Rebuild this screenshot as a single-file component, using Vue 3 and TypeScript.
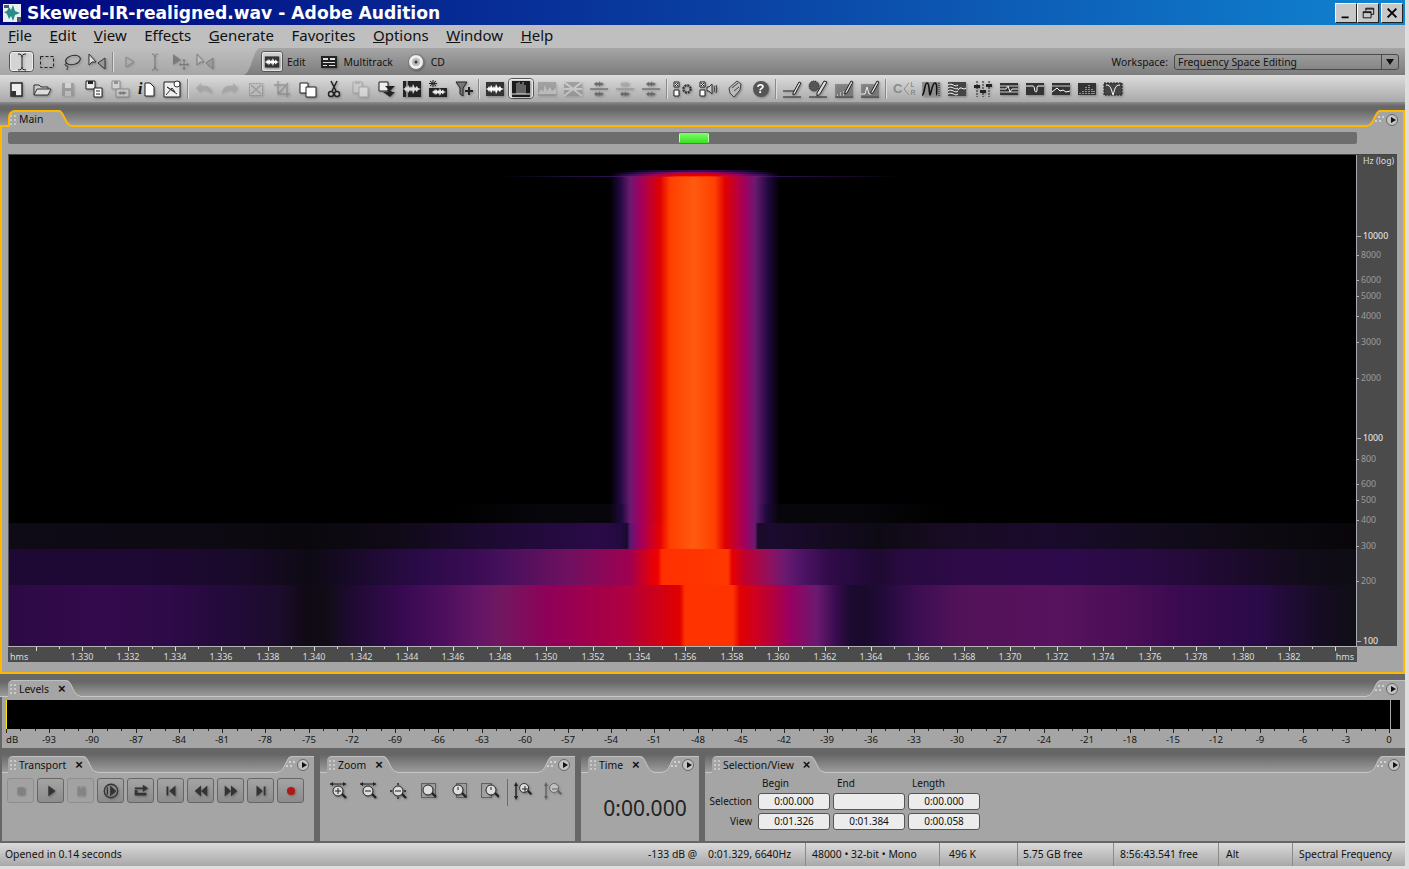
<template>
  <div class="app">
    <!-- shared icons -->
    <svg class="defs" aria-hidden="true">
      <defs>
        <linearGradient id="tbLeft" x1="0" y1="0" x2="0" y2="1">
          <stop offset="0" stop-color="#bebebe" />
          <stop offset="1" stop-color="#a6a6a6" />
        </linearGradient>
      </defs>
      <symbol id="tabCurve" viewBox="0 0 14 17">
        <path d="M0 0H1C6 0 7 16 14 16V17H0Z" fill="#a5a5a5" />
        <path d="M0 1H1C6 1 7 16 14 16" fill="none" stroke="currentColor" stroke-width="var(--sw, 1)" />
      </symbol>
      <symbol id="cornerCurve" viewBox="0 0 14 17">
        <path d="M14 0H13C8 0 7 16 0 16V17H14Z" fill="#a5a5a5" />
        <path d="M14 1H13C8 1 7 16 0 16" fill="none" stroke="currentColor" stroke-width="var(--sw, 1)" />
      </symbol>
      <symbol id="grip" viewBox="0 0 6 10">
        <path d="M0 0h2v2H0zM4 0h2v2H4zM0 4h2v2H0zM4 4h2v2H4zM0 8h2v2H0zM4 8h2v2H4z" fill="#c8c8c8" />
      </symbol>
      <symbol id="griph" viewBox="0 0 10 6">
        <path d="M3 0h2v2H3zM7 0h2v2H7zM0 4h2v2H0zM4 4h2v2H4z" fill="#d0d0d0" />
      </symbol>
      <symbol id="burst" viewBox="0 0 20 20">
        <path d="M1 10 3 9 4 7 5 9 6 6 8 9 9 7 10 9 11 5 13 9 15 7 16 9 19 10 16 11 15 13 13 11 11 15 10 11 9 13 8 11 6 14 5 11 4 13 3 11Z" />
      </symbol>

      <!-- edit tools -->
      <symbol id="ibeam" viewBox="0 0 20 20"><path d="M6 2C9 2 10 3 10 5V15C10 17 9 18 6 18M14 2C11 2 10 3 10 5M10 15C10 17 11 18 14 18" fill="none" stroke="#222" /></symbol>
      <symbol id="ibeam2" viewBox="0 0 20 20"><path d="M7 2C9 2 10 3 10 5V15C10 17 9 18 7 18M13 2C11 2 10 3 10 5M10 15C10 17 11 18 13 18" fill="none" stroke="#333" /></symbol>
      <symbol id="marquee" viewBox="0 0 20 20"><rect x="3.5" y="4.5" width="13" height="11" fill="none" stroke="#222" stroke-dasharray="3 2" /></symbol>
      <symbol id="lasso" viewBox="0 0 20 20"><ellipse cx="11" cy="8" rx="7.5" ry="4.5" transform="rotate(-14 11 8)" fill="none" stroke="#222" /><path d="M5 11c-3 1-2 3 0 3s0 2 0 4" fill="none" stroke="#222" /></symbol>
      <symbol id="scrub" viewBox="0 0 20 20"><path d="M2 2V13L5 10H9Z" fill="#ddd" stroke="#333" /><path d="M11 11 18 6V17Z" fill="#999" stroke="#333" /></symbol>
      <symbol id="scrub2" viewBox="0 0 20 20"><path d="M2 2V13L5 10H9Z" fill="#ccc" stroke="#444" /><path d="M11 11 18 6V17Z" fill="#888" stroke="#444" /></symbol>
      <symbol id="tsel" viewBox="0 0 20 20"><path d="M6 5V15L14 10Z" fill="#aaa" stroke="#555" /></symbol>
      <symbol id="hybrid" viewBox="0 0 20 20"><path d="M3 2V13L11 8Z" fill="#444" /><path d="M14 8V17M10 12.5H18" stroke="#444" /><path d="M14 7l-2 2h4zM14 18l-2-2h4zM9 12.5l2-2v4zM19 12.5l-2-2v4z" fill="#444" /></symbol>

      <!-- file and edit -->
      <symbol id="new" viewBox="0 0 20 20"><path d="M5 4H16V17H5Z" fill="#eee" stroke="#222" stroke-width="1.4" /><path d="M5 12H10V17H5Z" fill="#333" /></symbol>
      <symbol id="open" viewBox="0 0 20 20"><path d="M2 16V6H7L9 8H16V10" fill="#ccc" stroke="#333" /><path d="M2 16 5 10H19L16 16Z" fill="#ddd" stroke="#333" /></symbol>
      <symbol id="save" viewBox="0 0 20 20"><path d="M4 4H16V17H4Z" fill="#777" /><path d="M7 4H13V9H7Z" fill="#ddd" /><path d="M7 12H13V17H7Z" fill="#bbb" /></symbol>
      <symbol id="saveall" viewBox="0 0 20 20"><path d="M2 2H11V10H2Z" fill="#eee" stroke="#222" /><path d="M4 2H9V5H4Z" fill="#222" /><path d="M10 9H18V18H10Z" fill="#fff" stroke="#222" /><path d="M12 12h4M12 15h4" stroke="#222" /></symbol>
      <symbol id="batch" viewBox="0 0 20 20"><path d="M2 2H10V10H2Z" fill="#ddd" stroke="#555" /><path d="M4 2H8V5H4Z" fill="#555" /><path d="M6 10H19V18H6Z" fill="#ccc" stroke="#555" /><use href="#burst" x="6" y="9" width="13" height="10" fill="#333" /></symbol>
      <symbol id="infodoc" viewBox="0 0 20 20"><path d="M9 4H14L18 8V17H9Z" fill="#fff" stroke="#222" /></symbol>
      <symbol id="props" viewBox="0 0 20 20"><path d="M2 3H18V18H2Z" fill="#eee" stroke="#222" /><path d="M4 16 10 9 13 13 5 8 15 15" fill="none" stroke="#333" /><circle cx="15" cy="5" r="3" fill="#fff" stroke="#333" /></symbol>
      <symbol id="undo" viewBox="0 0 20 20"><path d="M2 9 7 4V7C13 6 18 8 18 15 16 12 12 11 7 11V14Z" fill="#8c8c8c" /></symbol>
      <symbol id="redo" viewBox="0 0 20 20"><path d="M18 9 13 4V7C7 6 2 8 2 15 4 12 8 11 13 11V14Z" fill="#8c8c8c" /></symbol>
      <symbol id="selx" viewBox="0 0 20 20"><rect x="3.5" y="4.5" width="13" height="12" fill="#bbb" stroke="#666" stroke-dasharray="2 1" /><path d="M5 6 15 15M15 6 5 15" stroke="#777" stroke-width="1.4" /></symbol>
      <symbol id="crop" viewBox="0 0 20 20"><path d="M6 2V15H18M2 6H15V18M16 4 6 15" fill="none" stroke="#666" stroke-width="1.4" /></symbol>
      <symbol id="copy" viewBox="0 0 20 20"><path d="M2 4H10V14H2Z" fill="#fff" stroke="#222" /><path d="M8 8H18V18H8Z" fill="#fff" stroke="#222" /></symbol>
      <symbol id="cut" viewBox="0 0 20 20"><path d="M7 2 12 12M13 2 8 12" stroke="#222" stroke-width="1.5" /><circle cx="7" cy="15" r="2.5" fill="#bbb" stroke="#222" stroke-width="1.4" /><circle cx="13" cy="15" r="2.5" fill="#bbb" stroke="#222" stroke-width="1.4" /></symbol>
      <symbol id="paste" viewBox="0 0 20 20"><path d="M3 3H12V14H3Z" fill="#ccc" stroke="#888" /><path d="M5 2H10V5H5Z" fill="#999" /><path d="M9 8H18V18H9Z" fill="#eee" stroke="#888" /></symbol>
      <symbol id="pastemix" viewBox="0 0 20 20"><path d="M3 3H12V12H3Z" fill="#eee" stroke="#222" /><path d="M9 7H19L14 12H16L14 15 11 11H13Z" fill="#222" /><path d="M7 13H19L14 18Z" fill="#222" /></symbol>
      <symbol id="wbar" viewBox="0 0 20 20"><path d="M1 2H19V18H1Z" fill="#222" /><path d="M5 2V18" stroke="#eee" /><use href="#burst" x="0" y="0" width="20" height="20" fill="#ddd" /></symbol>
      <symbol id="wstar" viewBox="0 0 20 20"><path d="M1 9H19V18H1Z" fill="#222" /><use href="#burst" x="2" y="5" width="18" height="16" fill="#eee" /><path d="M5 1V8M2 2 8 7M8 2 2 7M1 4.5H9" stroke="#222" /></symbol>
      <symbol id="filter" viewBox="0 0 20 20"><path d="M2 3H13L9 9V17L6 15V9Z" fill="#777" stroke="#222" /><path d="M15 8V16M11 12H19" stroke="#222" stroke-width="2" /></symbol>

      <!-- views -->
      <symbol id="vwave" viewBox="0 0 20 20"><path d="M1 3H19V17H1Z" fill="#333" /><use href="#burst" x="0" y="0" width="20" height="20" fill="#fff" /></symbol>
      <symbol id="vspec" viewBox="0 0 20 20"><path d="M1 2H19V18H1Z" fill="#1c1c1c" /><path d="M6 15V4M8 15V3M10 15V5M12 15V3M14 15V6" stroke="#ddd" opacity=".75" /><path d="M1 15H19" stroke="#eee" /></symbol>
      <symbol id="vbars" viewBox="0 0 20 20"><path d="M1 3H19V17H1Z" fill="#777" /><path d="M1 15 4 10 6 13 8 6 10 12 13 8 15 12 19 9V15Z" fill="#ccc" opacity=".8" /></symbol>
      <symbol id="vflag" viewBox="0 0 20 20"><path d="M1 3H19V17H1Z" fill="#777" /><path d="M1 3 19 17M19 3 1 17M1 10H19" stroke="#ccc" stroke-width="2" /></symbol>
      <symbol id="vtwo" viewBox="0 0 20 20"><path d="M1 10H19" stroke="#555" /><use href="#burst" x="1" y="-1" width="18" height="12" fill="#666" /><use href="#burst" x="1" y="9" width="18" height="12" fill="#666" /></symbol>
      <symbol id="vtwo2" viewBox="0 0 20 20"><path d="M1 10H19" stroke="#888" /><use href="#burst" x="1" y="-1" width="18" height="12" fill="#aaa" /><use href="#burst" x="1" y="9" width="18" height="12" fill="#666" /></symbol>

      <!-- effects, help -->
      <symbol id="fxgear" viewBox="0 0 20 20"><path d="M1 3H6V8H1Z" fill="#eee" stroke="#222" /><path d="M2 4 5 7M5 4 2 7" stroke="#222" /><path d="M1 11H6V17H1Z" fill="#fff" stroke="#222" /><circle cx="14" cy="10" r="3.6" fill="none" stroke="#333" stroke-width="2.4" stroke-dasharray="2 .8" /></symbol>
      <symbol id="fxspk" viewBox="0 0 20 20"><path d="M1 3H6V8H1Z" fill="#eee" stroke="#222" /><path d="M2 4 5 7M5 4 2 7" stroke="#222" /><path d="M1 11H6V17H1Z" fill="#fff" stroke="#222" /><path d="M8 8H10L13 5V15L10 12H8Z" fill="#ccc" stroke="#333" /><path d="M15 7C16 9 16 11 15 13M17 6C18 9 18 11 17 14" fill="none" stroke="#333" /></symbol>
      <symbol id="scroll" viewBox="0 0 20 20"><path d="M4 9 12 2 16 5 15 11 9 18 5 14Z" fill="#bbb" stroke="#444" /><path d="M7 9 13 4M9 12 14 8" stroke="#444" /></symbol>
      <symbol id="pen1" viewBox="0 0 20 20"><path d="M1 18H19" stroke="#222" /><path d="M1 12H12" stroke="#222" /><path d="M11 14 17 3 19 4 13 15 11 16Z" fill="#ddd" stroke="#222" /></symbol>
      <symbol id="pen2" viewBox="0 0 20 20"><path d="M1 18H19" stroke="#222" /><circle cx="6" cy="7" r="5" fill="#555" stroke="#222" stroke-dasharray="1 1" /><path d="M9 14 16 2 19 3 12 15 9 17Z" fill="#ddd" stroke="#222" /></symbol>
      <symbol id="pen3" viewBox="0 0 20 20"><path d="M1 18H19" stroke="#222" /><path d="M1 5H19V18H1Z" fill="#666" opacity=".6" /><path d="M3 16h1M6 14h1M6 16h1M9 13h1M9 16h1" stroke="#eee" /><path d="M11 13 17 2 19 3 13 14 11 15Z" fill="#ddd" stroke="#222" /></symbol>
      <symbol id="pen4" viewBox="0 0 20 20"><path d="M1 18H19" stroke="#222" /><path d="M1 5H19V18H1Z" fill="#666" opacity=".6" /><path d="M1 15H5L7 8 9 15H12" fill="none" stroke="#eee" /><path d="M11 13 17 2 19 3 13 14 11 15Z" fill="#ddd" stroke="#222" /></symbol>
      <symbol id="wedge" viewBox="0 0 6 14"><path d="M6 1 1 7 6 13" fill="none" stroke="#8a8a8a" /></symbol>
      <symbol id="eqpk" viewBox="0 0 20 20"><path d="M1 3H19V17H1Z" fill="#8e8e8e" /><path d="M1 16C4 16 3 4 6 4S8 16 9 16 11 4 14 4 15 16 16 16" fill="none" stroke="#111" stroke-width="1.6" /><path d="M18 4V17" stroke="#222" stroke-dasharray="1 1" /></symbol>
      <symbol id="eqwave" viewBox="0 0 20 20"><path d="M1 3H19V17H1Z" fill="#444" /><path d="M1 6C5 3 8 9 11 6M1 9C5 6 8 12 11 9M1 12C5 9 8 15 11 12M1 15C5 12 8 18 11 15M11 11C14 6 16 12 19 9" fill="none" stroke="#fff" /></symbol>
      <symbol id="faders" viewBox="0 0 20 20"><path d="M4 2V18M10 2V18M16 2V18" stroke="#222" stroke-dasharray="2 1" /><path d="M1 6H7V9H1ZM7 11H13V14H7ZM13 5H19V8H13Z" fill="#222" /></symbol>
      <symbol id="bx1" viewBox="0 0 20 20"><path d="M1 4H19V16H1Z" fill="#333" /><path d="M1 7H19M1 13H19" stroke="#ccc" /><path d="M1 10H7L9 7 11 13 13 10H19" fill="none" stroke="#eee" /></symbol>
      <symbol id="bx2" viewBox="0 0 20 20"><path d="M1 4H19V16H1Z" fill="#333" /><path d="M1 7H8C10 7 9 13 11 13S11 7 13 7H19" fill="none" stroke="#fff" /></symbol>
      <symbol id="bx3" viewBox="0 0 20 20"><path d="M1 4H19V16H1Z" fill="#333" /><path d="M1 7H19" stroke="#ccc" /><path d="M1 13 6 9 9 12 12 11 15 13 19 12" fill="none" stroke="#fff" /></symbol>
      <symbol id="bx4" viewBox="0 0 20 20"><path d="M1 4H19V16H1Z" fill="#333" /><path d="M3 15v-2M6 15v-4M9 15v-7M12 15v-9M15 15v-5M17 15v-3" stroke="#eee" stroke-dasharray="1 1" /></symbol>
      <symbol id="bx5" viewBox="0 0 20 20"><path d="M1 4H19V16H1Z" fill="#444" stroke="#222" stroke-dasharray="2 1" /><path d="M3 6C8 6 8 10 10 16 12 10 12 6 17 6" fill="none" stroke="#fff" /></symbol>

      <!-- transport -->
      <symbol id="tstop" viewBox="0 0 20 20"><path d="M6 6H14V14H6Z" fill="#808080" /></symbol>
      <symbol id="tplay" viewBox="0 0 20 20"><path d="M7 4V16L15 10Z" fill="#333" /></symbol>
      <symbol id="tpause" viewBox="0 0 20 20"><path d="M6 5H9V15H6ZM11 5H14V15H11Z" fill="#848484" /></symbol>
      <symbol id="tview" viewBox="0 0 20 20"><circle cx="10" cy="10" r="7.5" fill="none" stroke="#333" stroke-width="1.4" /><path d="M9 4V16L16 10Z" fill="#333" /><path d="M6 6V14" stroke="#333" stroke-width="1.4" /></symbol>
      <symbol id="tloop" viewBox="0 0 20 20"><path d="M3 9V15H16V12H6V9Z" fill="#333" /><path d="M3 6H12V3L18 7 12 11V8H3Z" fill="#333" /></symbol>
      <symbol id="tstart" viewBox="0 0 20 20"><path d="M5 5H7V15H5ZM15 4V16L8 10Z" fill="#333" /></symbol>
      <symbol id="trew" viewBox="0 0 20 20"><path d="M10 4V16L3 10ZM17 4V16L10 10Z" fill="#333" /></symbol>
      <symbol id="tff" viewBox="0 0 20 20"><path d="M3 4V16L10 10ZM10 4V16L17 10Z" fill="#333" /></symbol>
      <symbol id="tend" viewBox="0 0 20 20"><path d="M5 4V16L12 10ZM13 5H15V15H13Z" fill="#333" /></symbol>
      <symbol id="trec" viewBox="0 0 20 20"><circle cx="10" cy="10" r="4.5" fill="#b01818" /></symbol>

      <!-- zoom -->
      <symbol id="lens" viewBox="0 0 20 20"><path d="M12 12 17 17" stroke="#222" stroke-width="2.4" /><circle cx="9" cy="10" r="5" fill="#ddd" stroke="#222" /></symbol>
      <symbol id="zinx" viewBox="0 0 20 20"><path d="M1 3H17" stroke="#222" /><path d="M1 3 4 1V5ZM17 3 14 1V5Z" fill="#222" /><use href="#lens" width="20" height="20" /><path d="M6 10H12M9 7V13" stroke="#222" /></symbol>
      <symbol id="zoutx" viewBox="0 0 20 20"><path d="M1 3H17" stroke="#222" /><path d="M1 3 4 1V5ZM17 3 14 1V5Z" fill="#222" /><use href="#lens" width="20" height="20" /><path d="M6 10H12" stroke="#222" /></symbol>
      <symbol id="zfull" viewBox="0 0 20 20"><path d="M9 2V4M9 16V18M1 10H3M15 10H17" stroke="#222" stroke-width="1.4" /><use href="#lens" width="20" height="20" /><path d="M6 10H12" stroke="#222" /></symbol>
      <symbol id="zsel" viewBox="0 0 20 20"><rect x="2.5" y="2.5" width="14" height="14" fill="none" stroke="#222" stroke-dasharray="1 1" /><use href="#lens" y="-1" width="20" height="20" /></symbol>
      <symbol id="zl" viewBox="0 0 20 20"><rect x="7.5" y="2.5" width="10" height="14" fill="none" stroke="#222" stroke-dasharray="1 1" /><use href="#lens" y="-1" width="20" height="20" /><path d="M9 6V9" stroke="#222" /></symbol>
      <symbol id="zr" viewBox="0 0 20 20"><rect x="2.5" y="2.5" width="10" height="14" fill="none" stroke="#222" stroke-dasharray="1 1" /><use href="#lens" x="3" y="-1" width="20" height="20" /><path d="M12 6V9" stroke="#222" /></symbol>
      <symbol id="zinv" viewBox="0 0 20 20"><path d="M3 3V17" stroke="#222" stroke-width="1.4" /><path d="M3 1 1 5H5ZM3 19 1 15H5Z" fill="#222" /><use href="#lens" x="3" y="-2" width="18" height="18" /><path d="M9 8H15M12 5V11" stroke="#222" /></symbol>
      <symbol id="zoutv" viewBox="0 0 20 20"><path d="M3 3V17" stroke="#222" stroke-width="1.4" /><path d="M3 1 1 5H5ZM3 19 1 15H5Z" fill="#222" /><use href="#lens" x="3" y="-2" width="18" height="18" /><path d="M9 8H15" stroke="#222" /></symbol>
    </svg>

    <div class="window">
      <header class="title-bar">
        <svg class="app-icon" viewBox="0 0 18 18">
          <rect width="18" height="18" fill="#e8f0f0" />
          <path d="M1 8 4 7 6 3 8 6 10 1 12 7 17 9 12 11 10 17 8 12 6 15 4 10Z" fill="#2b8a8a" />
          <path d="M1 1H6V4H1ZM14 13H18V18H14Z" fill="#556" />
        </svg>
        <span class="title-text">Skewed-IR-realigned.wav - Adobe Audition</span>
        <div class="win-btns">
          <button class="win-btn">
            <svg viewBox="0 0 16 16"><path d="M3 12H11V14H3Z" fill="#000" /></svg>
          </button>
          <button class="win-btn">
            <svg viewBox="0 0 16 16"><path d="M5.5 2.5H14.5V9.5H11.5M5.5 2.5V5.5M5.5 3.5H14.5" fill="none" stroke="#000" /><path d="M2.5 6.5H11.5V13.5H2.5ZM2.5 7.5H11.5" fill="none" stroke="#000" /></svg>
          </button>
          <button class="win-btn close">
            <svg viewBox="0 0 16 16"><path d="M3 3 13 13M13 3 3 13" stroke="#000" stroke-width="2.2" /></svg>
          </button>
        </div>
      </header>

      <nav class="menu-bar">
        <span><u>F</u>ile</span>
        <span><u>E</u>dit</span>
        <span><u>V</u>iew</span>
        <span>Effe<u>c</u>ts</span>
        <span><u>G</u>enerate</span>
        <span>Favo<u>r</u>ites</span>
        <span><u>O</u>ptions</span>
        <span><u>W</u>indow</span>
        <span><u>H</u>elp</span>
      </nav>

      <div class="toolbar-one">
        <div class="tools-left">
          <template v-for="(t, i) in editTools" :key="i">
            <span v-if="t === '|'" class="sep sep-tool"></span>
            <span v-else class="tool" :class="{ selected: t === 'ibeam', off: offTools.includes(t) }">
              <svg class="ico"><use :href="'#' + t" /></svg>
            </span>
          </template>
        </div>
        <svg class="left-curve" viewBox="0 0 24 27" preserveAspectRatio="none">
          <path d="M0 0H24C14 4 12 27 0 27Z" fill="url(#tbLeft)" />
        </svg>
        <div class="modes">
          <span class="mode">
            <span class="mode-btn"><svg class="ico ico-sm"><use href="#vwave" /></svg></span>
            Edit
          </span>
          <span class="mode mode-next">
            <svg class="ico ico-sm" viewBox="0 0 16 12">
              <path d="M0 0H16V12H0Z" fill="#222" />
              <path d="M2 2H7V4H2ZM9 2H14V4H9ZM2 6H14V7H2ZM2 9H6V10H2ZM8 9H14V10H8Z" fill="#ddd" />
            </svg>
            Multitrack
          </span>
          <span class="mode mode-next">
            <svg class="ico ico-sm" viewBox="0 0 16 16">
              <circle cx="8" cy="8" r="7.5" fill="#eee" stroke="#777" />
              <circle cx="8" cy="8" r="4" fill="#bbb" />
              <circle cx="8" cy="8" r="1.5" fill="#333" />
            </svg>
            CD
          </span>
        </div>
        <div class="workspace">
          <span>Workspace:</span>
          <div class="combo">
            <span class="combo-text">Frequency Space Editing</span>
            <span class="combo-arrow"><i></i></span>
          </div>
        </div>
      </div>

      <div class="toolbar-two">
        <template v-for="(t, i) in mainTools" :key="i">
          <span v-if="t === '|'" class="sep"></span>
          <span v-else class="tool" :class="{ selected: t === 'vspec', off: offTools.includes(t) }">
            <span v-if="t === 'help'" class="help-ico">?</span>
            <template v-else-if="t === 'info'">
              <span class="info-i">i</span>
              <svg class="ico info-doc"><use href="#infodoc" /></svg>
            </template>
            <template v-else-if="t === 'clr'">
              <span class="clr-c">C</span>
              <svg class="clr-wedge"><use href="#wedge" /></svg>
              <span class="clr-lr"><span>L</span><span>R</span></span>
            </template>
            <svg v-else class="ico"><use :href="'#' + t" /></svg>
          </span>
        </template>
      </div>

      <!-- main editor panel -->
      <section class="main-panel">
        <div class="strip strip-main">
          <div class="tab tab-main">
            <svg class="grip"><use href="#grip" /></svg>
            <span>Main</span>
          </div>
          <svg class="curve curve-main"><use href="#tabCurve" /></svg>
          <div class="grow"></div>
          <svg class="curve curve-main"><use href="#cornerCurve" /></svg>
          <div class="corner corner-main">
            <svg class="grip-h"><use href="#griph" /></svg>
            <span class="menu-dot"><i></i></span>
          </div>
        </div>
        <div class="main-body">
          <div class="overview">
            <div class="thumb"></div>
          </div>
          <div class="viewer">
            <div class="spectrum">
              <div class="band band-top"></div>
              <div class="band band-arc1"></div>
              <div class="band band-arc2"></div>
              <div class="band band-arc3"></div>
              <div class="band band-line"></div>
              <div class="band band-col"></div>
              <div class="band band-faint"></div>
              <div class="band band-a"></div>
              <div class="band band-b"></div>
              <div class="band band-c"></div>
            </div>
            <div class="hz-ruler">
              <span class="hz-title">Hz (log)</span>
              <div
                v-for="m in hzMarks"
                :key="m.label"
                class="hz-mark"
                :class="{ major: m.major }"
                :style="{ top: m.y - 155 + 'px' }"
              >
                <i></i><span>{{ m.label }}</span>
              </div>
            </div>
            <div class="time-ruler">
              <i
                v-for="t in timeTicks"
                :key="t.x"
                class="tick"
                :class="{ big: t.major }"
                :style="{ left: t.x - 8 + 'px' }"
              ></i>
              <span class="hms">hms</span>
              <span
                v-for="t in timeLabels"
                :key="t.label"
                class="time-label"
                :style="{ left: t.x - 8 + 'px' }"
              >{{ t.label }}</span>
              <span class="hms hms-end">hms</span>
            </div>
          </div>
        </div>
      </section>

      <!-- levels -->
      <section class="levels">
        <div class="strip strip-levels">
          <div class="tab">
            <svg class="grip"><use href="#grip" /></svg>
            <span>Levels</span>
            <b class="close-x">×</b>
          </div>
          <svg class="curve"><use href="#tabCurve" /></svg>
          <div class="grow"></div>
          <svg class="curve"><use href="#cornerCurve" /></svg>
          <div class="corner corner-main corner-levels">
            <svg class="grip-h"><use href="#griph" /></svg>
            <span class="menu-dot"><i></i></span>
          </div>
        </div>
        <div class="levels-body">
          <div class="meter">
            <i class="meter-peak"></i>
            <i class="meter-end"></i>
          </div>
          <div class="db-scale">
            <i
              v-for="t in dbTicks"
              :key="t.x"
              class="db-tick"
              :class="{ big: t.major }"
              :style="{ left: t.x + 'px' }"
            ></i>
            <span
              v-for="d in dbLabels"
              :key="d.label"
              class="db-label"
              :style="{ left: d.x + 'px' }"
            >{{ d.label }}</span>
          </div>
        </div>
      </section>

      <!-- bottom docked panels -->
      <div class="dock-row">
        <section class="dock dock-transport">
          <div class="strip">
            <div class="tab">
              <svg class="grip"><use href="#grip" /></svg>
              <span>Transport</span>
              <b class="close-x">×</b>
            </div>
            <svg class="curve"><use href="#tabCurve" /></svg>
            <div class="grow"></div>
            <svg class="curve"><use href="#cornerCurve" /></svg>
            <div class="corner">
              <svg class="grip-h"><use href="#griph" /></svg>
              <span class="menu-dot"><i></i></span>
            </div>
          </div>
          <div class="dock-body transport-body">
            <button
              v-for="b in transportBtns"
              :key="b"
              class="t-btn"
              :class="{ 't-off': b === 'tstop' || b === 'tpause' }"
            >
              <svg class="ico"><use :href="'#' + b" /></svg>
            </button>
          </div>
        </section>

        <section class="dock dock-zoom">
          <div class="strip">
            <div class="tab">
              <svg class="grip"><use href="#grip" /></svg>
              <span>Zoom</span>
              <b class="close-x">×</b>
            </div>
            <svg class="curve"><use href="#tabCurve" /></svg>
            <div class="grow"></div>
            <svg class="curve"><use href="#cornerCurve" /></svg>
            <div class="corner">
              <svg class="grip-h"><use href="#griph" /></svg>
              <span class="menu-dot"><i></i></span>
            </div>
          </div>
          <div class="dock-body zoom-body">
            <template v-for="(z, i) in zoomBtns" :key="i">
              <span v-if="z === '|'" class="zoom-sep"></span>
              <span v-else class="z-btn" :class="{ off: z === 'zoutv' }">
                <svg class="ico"><use :href="'#' + z" /></svg>
              </span>
            </template>
          </div>
        </section>

        <section class="dock dock-time">
          <div class="strip">
            <div class="tab">
              <svg class="grip"><use href="#grip" /></svg>
              <span>Time</span>
              <b class="close-x">×</b>
            </div>
            <svg class="curve"><use href="#tabCurve" /></svg>
            <div class="grow"></div>
            <svg class="curve"><use href="#cornerCurve" /></svg>
            <div class="corner">
              <svg class="grip-h"><use href="#griph" /></svg>
              <span class="menu-dot"><i></i></span>
            </div>
          </div>
          <div class="dock-body time-body">0:00.000</div>
        </section>

        <section class="dock dock-sel">
          <div class="strip">
            <div class="tab">
              <svg class="grip"><use href="#grip" /></svg>
              <span>Selection/View</span>
              <b class="close-x">×</b>
            </div>
            <svg class="curve"><use href="#tabCurve" /></svg>
            <div class="grow"></div>
            <svg class="curve"><use href="#cornerCurve" /></svg>
            <div class="corner">
              <svg class="grip-h"><use href="#griph" /></svg>
              <span class="menu-dot"><i></i></span>
            </div>
          </div>
          <div class="dock-body sel-body">
            <div class="sel-grid">
              <span></span>
              <span class="sel-head">Begin</span>
              <span class="sel-head">End</span>
              <span class="sel-head">Length</span>
              <span class="sel-label">Selection</span>
              <span class="sel-field">0:00.000</span>
              <span class="sel-field"></span>
              <span class="sel-field">0:00.000</span>
              <span class="sel-label">View</span>
              <span class="sel-field">0:01.326</span>
              <span class="sel-field">0:01.384</span>
              <span class="sel-field">0:00.058</span>
            </div>
          </div>
        </section>
      </div>

      <footer class="status-bar">
        <span class="cell c1">Opened in 0.14 seconds</span>
        <span class="cell c2">-133 dB @</span>
        <span class="cell c3">0:01.329, 6640Hz</span>
        <span class="cell c4">48000 • 32-bit • Mono</span>
        <span class="cell c5">496 K</span>
        <span class="cell c6">5.75 GB free</span>
        <span class="cell c7">8:56:43.541 free</span>
        <span class="cell c8">Alt</span>
        <span class="cell c9">Spectral Frequency</span>
      </footer>
    </div>
  </div>
</template>

<script setup lang="ts">
const editTools = ['ibeam', 'marquee', 'lasso', 'scrub', '|', 'tsel', 'ibeam2', 'hybrid', 'scrub2']

const mainTools = [
  'new', 'open', 'save', 'saveall', 'batch', 'info', 'props', '|',
  'undo', 'redo', 'selx', 'crop', 'copy', 'cut', 'paste', 'pastemix', 'wbar', 'wstar', 'filter', '|',
  'vwave', 'vspec', 'vbars', 'vflag', 'vtwo', 'vtwo2', 'vtwo', '|',
  'fxgear', 'fxspk', 'scroll', 'help', '|',
  'pen1', 'pen2', 'pen3', 'pen4', '|',
  'clr', 'eqpk', 'eqwave', 'faders', 'bx1', 'bx2', 'bx3', 'bx4', 'bx5',
]

const offTools = ['tsel', 'ibeam2', 'hybrid', 'scrub2', 'save', 'batch', 'undo', 'redo', 'selx', 'crop', 'paste', 'vbars', 'vflag']

const transportBtns = ['tstop', 'tplay', 'tpause', 'tview', 'tloop', 'tstart', 'trew', 'tff', 'tend', 'trec']
const zoomBtns = ['zinx', 'zoutx', 'zfull', 'zsel', 'zl', 'zr', '|', 'zinv', 'zoutv']

const hzMarks = [
  { label: '10000', y: 236, major: true },
  { label: '8000', y: 255 },
  { label: '6000', y: 280 },
  { label: '5000', y: 296 },
  { label: '4000', y: 316 },
  { label: '3000', y: 342 },
  { label: '2000', y: 378 },
  { label: '1000', y: 438, major: true },
  { label: '800', y: 459 },
  { label: '600', y: 484 },
  { label: '500', y: 500 },
  { label: '400', y: 520 },
  { label: '300', y: 546 },
  { label: '200', y: 581 },
  { label: '100', y: 641, major: true },
]

// one label every 46.42px, starting at 1.330
const timeLabels = Array.from({ length: 27 }, (_, i) => ({
  label: (1.33 + i * 0.002).toFixed(3),
  x: Math.round(82 + i * 46.42),
}))

const timeTicks = Array.from({ length: 59 }, (_, i) => ({
  x: Math.round(35.6 + i * 23.21),
  major: i % 2 === 0,
}))

const dbTicks = Array.from({ length: 97 }, (_, i) => ({
  x: Math.round(4 + i * 14.41),
  major: i % 3 === 0,
}))

const dbLabels = Array.from({ length: 33 }, (_, i) => ({
  label: i === 0 ? 'dB' : String(-96 + i * 3),
  x: Math.round(4 + i * 43.23),
}))
</script>

<style>
html, body { margin: 0; background: #e2e2e2; }
</style>

<style scoped>
.app {
  width: 1409px;
  height: 869px;
  overflow: hidden;
  background: #dedede;
  font: 10.4px "Noto Sans", "Liberation Sans", sans-serif;
  color: #111;
  display: flex;
  flex-direction: column;
}
.defs { width: 0; height: 0; display: block; }
.window { width: 1405px; height: 866px; background: #666; display: flex; flex-direction: column; }

/* title */
.title-bar {
  height: 25px;
  flex: none;
  display: flex;
  align-items: center;
  background: linear-gradient(90deg, #00067e 0%, #0a3ea0 50%, #1084d0 100%);
  color: #fff;
  padding-left: 3px;
}
.app-icon { width: 18px; height: 18px; }
.title-text { margin: 1px 0 0 6px; font: bold 17.15px "DejaVu Sans", sans-serif; white-space: nowrap; }
.win-btns { margin-left: auto; display: flex; margin-right: 2px; }
.win-btn {
  width: 22px;
  height: 20px;
  padding: 2px 3px;
  background: #c8c8c8;
  border: 1px solid;
  border-color: #fff #222 #222 #fff;
  display: flex;
  align-items: center;
  justify-content: center;
}
.win-btn svg { width: 16px; height: 16px; display: block; }
.win-btn.close { margin-left: 2px; }

/* menu */
.menu-bar {
  height: 23px;
  flex: none;
  background: #bfbfbf;
  display: flex;
  align-items: center;
  gap: 17.5px;
  padding-left: 8px;
  font-size: 15px;
}
.menu-bar span { line-height: 22px; margin-top: -3px; }

/* toolbars */
.toolbar-one {
  height: 27px;
  flex: none;
  display: flex;
  align-items: center;
  background: linear-gradient(#a6a6a6, #7c7c7c);
}
.tools-left {
  width: 243px;
  height: 27px;
  padding-left: 9px;
  box-sizing: border-box;
  display: flex;
  align-items: center;
  background: linear-gradient(#bebebe, #a6a6a6);
}
.left-curve { width: 16px; height: 27px; flex: none; }
.tool {
  width: 26px;
  height: 21px;
  flex: none;
  box-sizing: border-box;
  display: flex;
  align-items: center;
  justify-content: center;
}
.tool.selected {
  border: 1px solid #555;
  border-radius: 4px;
  outline: 1px solid #eee;
  outline-offset: -2px;
  background: #d4d4d4;
}
.tools-left .tool { width: 25px; }
.off { opacity: 0.5; }
.ico {
  width: 20px;
  height: 20px;
  display: block;
  flex: none;
  filter: drop-shadow(1px 1px 1px rgba(0, 0, 0, 0.3));
}
.ico-sm { width: 16px; height: 16px; }
.sep {
  width: 1px;
  height: 20px;
  margin: 0 1.75px;
  background: #8a8a8a;
  border-right: 1px solid #ddd;
  flex: none;
}
.sep-tool { margin: 0 3px; }
.modes { display: flex; align-items: center; padding-left: 2px; }
.mode { display: flex; align-items: center; gap: 7px; }
.mode-btn {
  width: 22px;
  height: 21px;
  margin-right: -3px;
  box-sizing: border-box;
  border: 1px solid #555;
  border-radius: 3px;
  outline: 1px solid #e6e6e6;
  outline-offset: -2px;
  background: #cfcfcf;
  display: flex;
  align-items: center;
  justify-content: center;
}
.mode-next { margin-left: 15px; }
.workspace { margin-left: auto; display: flex; align-items: center; gap: 6px; padding-right: 6px; }
.combo {
  width: 225px;
  height: 16px;
  box-sizing: border-box;
  border: 1px solid #4a4a4a;
  border-radius: 3px;
  display: flex;
  align-items: center;
}
.combo-text { flex: 1; padding-left: 3px; line-height: 14px; }
.combo-arrow {
  width: 16px;
  height: 14px;
  border-left: 1px solid #4a4a4a;
  display: flex;
  align-items: center;
  justify-content: center;
}
.combo-arrow i {
  border-left: 4px solid transparent;
  border-right: 4px solid transparent;
  border-top: 6px solid #111;
}
.toolbar-two {
  height: 27px;
  flex: none;
  padding-left: 3px;
  display: flex;
  align-items: center;
  background: linear-gradient(#dcdcdc, #a9a9a9);
}
.toolbar-two .sep:nth-last-child(10) { margin-right: 5.5px; }
.help-ico {
  width: 16px;
  height: 16px;
  border-radius: 50%;
  background: #555;
  color: #fff;
  font: bold 13px/16px "Liberation Sans", sans-serif;
  text-align: center;
  filter: drop-shadow(1px 1px 1px rgba(0, 0, 0, 0.3));
}
.info-i { font: italic bold 16px/20px "Liberation Serif", serif; color: #111; width: 6px; margin-left: 2px; }
.info-doc { margin-left: -8px; }
.clr-c { font: bold 13px/20px "Liberation Sans", sans-serif; color: #8a8a8a; margin-left: -2px; }
.clr-wedge { width: 6px; height: 14px; flex: none; margin: 0 1px; }
.clr-lr { display: flex; flex-direction: column; font: 7px/8px "Liberation Sans", sans-serif; color: #777; }

/* tab strips */
.strip {
  height: 18px;
  flex: none;
  display: flex;
  align-items: flex-end;
  padding-left: 6px;
  box-sizing: border-box;
  color: #c6c6c6;
  background: linear-gradient(#686868, #9c9c9c);
  border-bottom: 1px solid #c6c6c6;
}
.grow { flex: 1; }
.tab {
  height: 17px;
  margin-bottom: -1px;
  padding: 0 0 0 2px;
  display: flex;
  align-items: center;
  background: #a5a5a5;
  border-top-left-radius: 5px;
  border-top: 1px solid #c0c0c0;
  box-sizing: border-box;
  white-space: nowrap;
  color: #111;
}
.tab span { margin-top: 0; }
.tab-main span { margin-top: -2px; }
.grip { width: 6px; height: 10px; margin-right: 3px; flex: none; }
.grip-h { width: 10px; height: 6px; margin: -2px 1px 0 -6px; flex: none; }
.close-x { margin-left: 9px; font: bold 13px "Liberation Sans", sans-serif; line-height: 10px; }
.curve { width: 14px; height: 17px; margin-bottom: -1px; flex: none; display: block; }
.corner {
  width: 22px;
  height: 17px;
  margin-bottom: -1px;
  background: #a5a5a5;
  display: flex;
  align-items: center;
  border-top: 1px solid #c0c0c0;
  box-sizing: border-box;
}
.menu-dot {
  width: 12px;
  height: 12px;
  border-radius: 50%;
  border: 1px solid #666;
  background: #c4c4c4;
  display: flex;
  align-items: center;
  justify-content: center;
  padding-left: 2px;
  box-sizing: border-box;
}
.menu-dot i {
  border-top: 3.5px solid transparent;
  border-bottom: 3.5px solid transparent;
  border-left: 5px solid #111;
}

/* main panel */
.main-panel { height: 572px; flex: none; display: flex; flex-direction: column; }
.strip-main {
  height: 25px;
  padding-left: 8px;
  color: #ffb800;
  --sw: 2;
  border-bottom: 2px solid #ffb800;
  background: linear-gradient(#8c8c8c 0, #686868 4px, #686868 8px, #9c9c9c 100%);
}
.tab-main {
  width: 50px;
  height: 17px;
  margin-bottom: -2px;
  border-top: 2px solid #ffb800;
  border-left: 2px solid #ffb800;
  border-top-left-radius: 7px;
  padding-left: 0;
}
.curve-main { margin-bottom: -2px; }
.corner-main {
  width: 24px;
  margin-bottom: -2px;
  border-top: 2px solid #ffb800;
  border-right: 2px solid #ffb800;
}
.corner-levels { margin-bottom: -1px; border-top: 1px solid #c0c0c0; border-right: 0; }
.main-body {
  flex: 1;
  background: #a5a5a5;
  border: solid #ffb800;
  border-width: 0 2px 2px;
  padding: 5px 0 0 6px;
  min-height: 0;
}
.overview { width: 1349px; height: 12px; background: #6d6d6d; border-radius: 2px; display: flex; padding-left: 671px; box-sizing: border-box; }
.thumb {
  width: 30px;
  height: 10px;
  margin-top: 1px;
  border-radius: 2px;
  background: linear-gradient(#7dff6a, #3ae020);
  box-shadow: inset 5px 0 0 -4px #bfffb0, inset -5px 0 0 -4px #bfffb0;
}
.viewer {
  margin-top: 11px;
  display: grid;
  grid-template-columns: 1349px 40px;
  grid-template-rows: 491px 16px;
  box-shadow: 0 -1px 0 #444;
  width: 1389px;
}
.spectrum { display: flex; flex-direction: column; background: #000; border-left: 1px solid #555; border-right: 1px solid #a8aab8; }
.band { background-size: 1409px 100%; background-position: -9px 0; background-repeat: no-repeat; flex: none; }
.band-top { height: 15px; background: #000; }
.band-arc1 {
  height: 2px;
  background-image: linear-gradient(90deg, #000 625px, #1a0a30 650px, #3a1060 700px, #1a0a30 745px, #000 770px);
}
.band-arc2 {
  height: 2px;
  background-image: linear-gradient(90deg, #000 612px, #2a1050 640px, #901060 680px, #a00060 715px, #2a1050 750px, #000 778px);
}
.band-arc3 {
  height: 2px;
  background-image: linear-gradient(90deg, #000 610px, #3a1060 630px, #a00060 655px, #e00000 680px, #e00000 710px, #a00060 735px, #3a1060 760px, #000 780px);
}
.band-line {
  height: 1px;
  background-image: linear-gradient(90deg, #000 500px, #1a0f30 560px, #2a1050 612px, #6a1a70 632px, #c00030 660px, #ff3000 680px, #ff3000 710px, #c00030 730px, #6a1a70 756px, #2a1050 775px, #14081f 860px, #000 900px);
}
.band-col {
  height: 327px;
  background-image: linear-gradient(90deg, #000 610px, #200a40 620px, #6a1a70 630px, #a00060 640px, #e00000 660px, #ff4000 670px, #ff5a10 694px, #ff4000 715px, #e00000 725px, #a00060 745px, #6a1a70 755px, #200a40 768px, #000 780px);
}
.band-faint {
  height: 19px;
  background-image: linear-gradient(90deg, #000 450px, #07060b 540px, #08060c 610px, #200a40 622px, #6a1a70 630px, #a00060 640px, #e00000 660px, #ff4000 670px, #ff5a10 694px, #ff4000 715px, #e00000 725px, #a00060 745px, #6a1a70 755px, #200a40 766px, #08060c 778px, #07060b 860px, #000 950px);
}
.band-a {
  height: 26px;
  background-image: linear-gradient(90deg, #0e0a16 9px, #0e0a14 200px, #0a080c 300px, #100a18 400px, #1c0a30 480px, #2a0a48 600px, #240a40 620px, #1a0a30 627px, #5a1a70 630px, #a00060 640px, #e80000 660px, #ff4000 670px, #ff5a10 694px, #ff4000 715px, #e00000 725px, #a00060 745px, #6a1a70 755px, #1a0a28 758px, #1c0a30 770px, #0e0a14 880px, #180c24 950px, #1a0a2c 1050px, #120c1e 1150px, #0e0a12 1250px, #08060a 1355px);
}
.band-b {
  height: 36px;
  background-image: linear-gradient(90deg, #1e0834 9px, #1e0834 150px, #180a28 250px, #0e0a14 310px, #180a28 350px, #2a0a48 420px, #3c0c54 480px, #44105c 500px, #701060 570px, #a00050 630px, #e00010 650px, #f00000 658px, #ff3000 662px, #ff3800 728px, #e80000 732px, #c00030 745px, #901060 770px, #6a1a70 785px, #501468 800px, #300a48 830px, #240a3c 860px, #1e0a30 880px, #280a40 900px, #2e0a48 960px, #2e0a4c 1060px, #280a40 1160px, #1c0a2c 1240px, #120c1a 1300px, #0e0c14 1355px);
}
.band-c {
  height: 61px;
  background-image: linear-gradient(90deg, #2c0a44 9px, #340a4c 100px, #2e0a48 170px, #240a3c 220px, #1c0c2c 280px, #100a14 305px, #100c14 325px, #1e0a30 350px, #360a50 400px, #4a0e5c 440px, #641666 480px, #701860 500px, #900058 550px, #b00040 627px, #c80020 650px, #e00000 680px, #ff3300 685px, #ff3300 733px, #e00000 740px, #d00020 755px, #b80038 770px, #980060 790px, #6a1a70 817px, #3a0c50 835px, #1c0a30 850px, #1a0a2c 865px, #200a38 880px, #3e0e54 920px, #521258 960px, #58125e 1060px, #4a0e56 1130px, #3a0a50 1180px, #2a0a48 1260px, #160c22 1320px, #100e16 1355px);
}
.hz-ruler { position: relative; background: #4b4b4b; color: #c4c4c4; font-size: 8.8px; }
.hz-title { position: absolute; top: 0; left: 6px; color: #ddd; white-space: nowrap; }
.hz-mark { position: absolute; left: 0; height: 12px; margin-top: -6px; display: flex; align-items: center; color: #9c9c9c; }
.hz-mark i { width: 2px; height: 1px; background: #b0b0b0; margin-right: 2px; }
.hz-mark span { line-height: 12px; }
.hz-mark.major { color: #eee; }
.hz-mark.major i { width: 4px; margin-right: 2px; }
.time-ruler { grid-column: 1; position: relative; background: #4b4b4b; color: #ddd; font-size: 9px; border-top: 1px solid #b4b4b4; box-sizing: border-box; overflow: hidden; }
.tick { position: absolute; top: 0; width: 1px; height: 2px; background: #ddd; }
.tick.big { height: 4px; }
.hms { position: absolute; left: 2px; top: 3px; }
.hms-end { left: auto; right: 3px; }
.time-label { position: absolute; top: 3px; transform: translateX(-50%); }

/* levels */
.levels { height: 74px; flex: none; display: flex; flex-direction: column; }
.strip-levels { height: 23px; padding-left: 8px; background: linear-gradient(#686868 8px, #9c9c9c 100%); }
.levels-body { flex: 1; margin-left: 2px; background: #a5a5a5; }
.meter { height: 29px; margin: 3px 5px 0 4px; background: #000; position: relative; }
.meter-peak { position: absolute; left: 0; top: 0; bottom: 0; width: 1px; background: #ffe800; }
.meter-end { position: absolute; right: 9px; top: 0; bottom: 0; width: 1px; background: #aaa; }
.db-scale { position: relative; height: 19px; font-size: 9.6px; color: #151515; }
.db-tick { position: absolute; top: 0; width: 1px; height: 2px; background: #222; }
.db-tick.big { height: 4px; }
.db-label { position: absolute; top: 4px; transform: translateX(-50%); }
.db-label:first-of-type { transform: none; }

/* docks */
.dock-row { height: 93px; flex: none; padding: 7px 0 0 2px; box-sizing: border-box; display: flex; gap: 6px; }
.dock { display: flex; flex-direction: column; height: 86px; }
.dock-transport { width: 312px; }
.dock-zoom { width: 255px; }
.dock-zoom .strip, .dock-time .strip, .dock-sel .strip { padding-left: 7px; }
.dock-time { width: 118px; }
.dock-sel { width: 700px; }
.dock-body { flex: 1; background: #a5a5a5; }
.transport-body { padding: 5px 0 0 5px; display: flex; align-items: flex-start; gap: 3px; }
.t-btn {
  width: 27px;
  height: 25px;
  padding: 0;
  border: 1px solid #666;
  border-radius: 3px;
  background: linear-gradient(#a4a4a4, #8c8c8c);
  display: flex;
  align-items: center;
  justify-content: center;
}
.t-off { border-color: #8e8e8e; background: #a2a2a2; }
.t-btn .ico { width: 18px; height: 18px; }
.zoom-body { padding: 6px 0 0 7px; display: flex; align-items: flex-start; gap: 6px; }
.z-btn { width: 24px; height: 24px; display: flex; align-items: center; justify-content: center; }
.zoom-sep { width: 1px; height: 27px; background: #6c6c6c; margin-right: -3px; }
.time-body { font-size: 21px; color: #222; text-align: center; padding: 21px 0 0 10px; box-sizing: border-box; line-height: 28px; }
.sel-body { padding-top: 4px; }
.sel-grid {
  display: grid;
  grid-template-columns: 50px 72px 72px 72px;
  grid-template-rows: 13px 17px 17px;
  column-gap: 3px;
  row-gap: 3px;
  font-size: 10px;
}
.sel-head { padding-left: 4px; line-height: 13px; }
.sel-label { text-align: right; line-height: 16px; padding-right: 3px; }
.sel-field {
  background: #ececec;
  border: 1px solid #555;
  border-radius: 3px;
  box-sizing: border-box;
  text-align: center;
  line-height: 15px;
}

/* status */
.status-bar {
  height: 23px;
  margin-top: 2px;
  flex: none;
  display: flex;
  align-items: center;
  background: linear-gradient(#dadada, #a8a8a8);
}
.cell { height: 23px; line-height: 22px; box-sizing: border-box; white-space: nowrap; flex: none; }
.c1 { width: 644px; padding-left: 5px; }
.c2 { width: 60px; padding-left: 4px; }
.c3 { width: 102px; padding-left: 4px; border-right: 1px solid #8a8a8a; }
.c4 { width: 134px; padding-left: 6px; border-right: 1px solid #8a8a8a; }
.c5 { width: 78px; padding-left: 9px; border-right: 1px solid #8a8a8a; }
.c6 { width: 96px; padding-left: 5px; border-right: 1px solid #8a8a8a; }
.c7 { width: 105px; padding-left: 6px; border-right: 1px solid #8a8a8a; }
.c8 { width: 74px; padding-left: 7px; border-right: 1px solid #8a8a8a; }
.c9 { flex: 1; padding-left: 6px; }
</style>
